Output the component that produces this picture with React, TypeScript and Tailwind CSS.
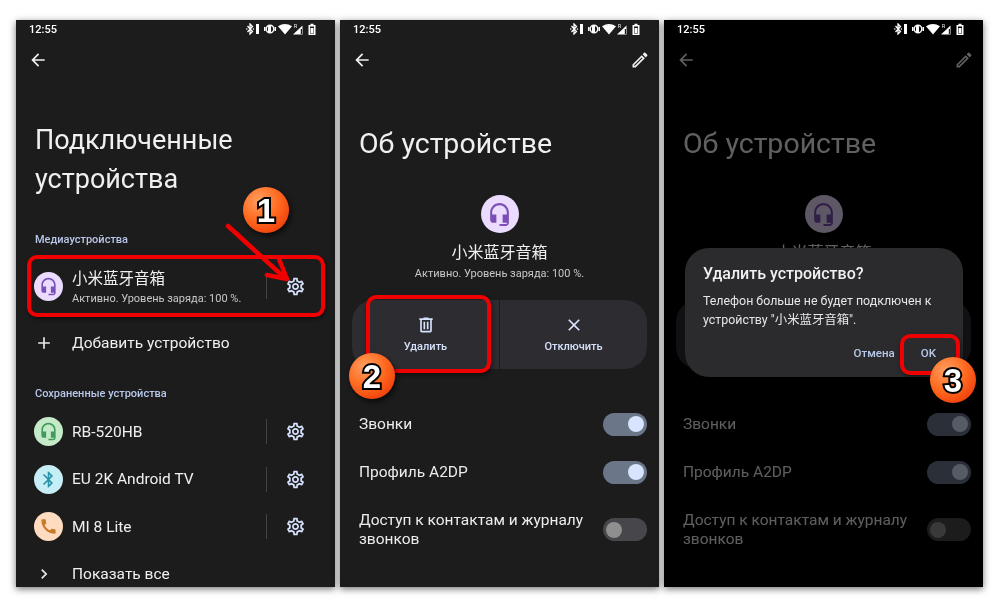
import React from "react";

const GEAR = "M19.43 12.98c.04-.32.07-.64.07-.98 0-.34-.03-.66-.07-.98l2.11-1.65c.19-.15.24-.42.12-.64l-2-3.46c-.09-.16-.26-.25-.44-.25-.06 0-.12.01-.17.03l-2.49 1c-.52-.4-1.08-.73-1.69-.98l-.38-2.65C14.46 2.18 14.25 2 14 2h-4c-.25 0-.46.18-.49.42l-.38 2.65c-.61.25-1.17.59-1.69.98l-2.49-1c-.06-.02-.12-.03-.18-.03-.17 0-.34.09-.43.25l-2 3.46c-.13.22-.07.49.12.64l2.11 1.65c-.04.32-.07.65-.07.98 0 .33.03.66.07.98l-2.11 1.65c-.19.15-.24.42-.12.64l2 3.46c.09.16.26.25.44.25.06 0 .12-.01.17-.03l2.49-1c.52.4 1.08.73 1.69.98l.38 2.65c.03.24.24.42.49.42h4c.25 0 .46-.18.49-.42l.38-2.65c.61-.25 1.17-.59 1.69-.98l2.49 1c.06.02.12.03.18.03.17 0 .34-.09.43-.25l2-3.46c.12-.22.07-.49-.12-.64l-2.11-1.65zm-1.98-1.71c.04.31.05.52.05.73 0 .21-.02.43-.05.73l-.14 1.13.89.7 1.08.84-.7 1.21-1.27-.51-1.04-.42-.9.68c-.43.32-.84.56-1.25.73l-1.06.43-.16 1.13-.2 1.35h-1.4l-.19-1.35-.16-1.13-1.06-.43c-.43-.18-.83-.41-1.23-.71l-.91-.7-1.06.43-1.27.51-.7-1.21 1.08-.84.89-.7-.14-1.13c-.03-.31-.05-.54-.05-.74s.02-.43.05-.73l.14-1.13-.89-.7-1.08-.84.7-1.21 1.27.51 1.04.42.9-.68c.43-.32.84-.56 1.25-.73l1.06-.43.16-1.13.2-1.35h1.39l.19 1.35.16 1.13 1.06.43c.43.18.83.41 1.23.71l.91.7 1.06-.43 1.27-.51.7 1.21-1.07.85-.89.7.14 1.13zM12 8c-2.21 0-4 1.79-4 4s1.79 4 4 4 4-1.79 4-4-1.79-4-4-4zm0 6c-1.1 0-2-.9-2-2s.9-2 2-2 2 .9 2 2-.9 2-2 2z";
const HEADSET = "M12 1c-4.97 0-9 4.03-9 9v7c0 1.66 1.34 3 3 3h3v-8H5v-2c0-3.87 3.13-7 7-7s7 3.13 7 7v2h-4v8h4v1h-7v2h6c1.66 0 3-1.34 3-3V10c0-4.97-4.03-9-9-9z";
const BT = "M17.71 7.71L12 2h-1v7.59L6.41 5 5 6.41 10.59 12 5 17.59 6.41 19 11 14.41V22h1l5.71-5.71-4.3-4.29 4.3-4.29zM13 5.83l1.88 1.88L13 9.59V5.83zm1.88 10.46L13 18.17v-3.76l1.88 1.88z";
const PHONE = "M20.01 15.38c-1.23 0-2.42-.2-3.53-.56-.35-.12-.74-.03-1.01.24l-1.57 1.97c-2.83-1.35-5.48-3.9-6.89-6.83l1.95-1.66c.27-.28.35-.67.24-1.02-.37-1.11-.56-2.3-.56-3.53 0-.54-.45-.99-.99-.99H4.19C3.65 3 3 3.24 3 3.99 3 13.28 10.73 21 20.01 21c.71 0 .99-.63.99-1.18v-3.45c0-.54-.45-.99-.99-.99z";
const TRASH = "M15 4V3H9v1H4v2h1v13c0 1.1.9 2 2 2h10c1.1 0 2-.9 2-2V6h1V4h-5zm2 15H7V6h10v13zM9 8h2v9H9zm4 0h2v9h-2z";
const PENCIL = "M14.06 9.02l.92.92L5.92 19H5v-.92l9.06-9.06M17.66 3c-.25 0-.51.1-.7.29l-1.83 1.83 3.75 3.75 1.83-1.83c.39-.39.39-1.02 0-1.41l-2.34-2.34c-.2-.2-.45-.29-.71-.29zm-3.6 3.19L3 17.25V21h3.75L17.81 9.94l-3.75-3.75z";
const ARROW = "M20 11H7.83l5.59-5.59L12 4l-8 8 8 8 1.41-1.41L7.83 13H20v-2z";
const CLOSE = "M19 6.41L17.59 5 12 10.59 6.41 5 5 6.41 10.59 12 5 17.59 6.41 19 12 13.41 17.59 19 19 17.59 13.41 12z";
const PLUS = "M19 13h-6v6h-2v-6H5v-2h6V5h2v6h6v2z";
const CHEVRON = "M10 6L8.59 7.41 13.17 12l-4.58 4.59L10 18l6-6z";

function Icon({ d, size, className }: { d: string; size: number; className?: string }) {
  return (
    <svg width={size} height={size} viewBox="0 0 24 24" fill="currentColor" className={"shrink-0 " + (className ?? "")}>
      <path d={d} />
    </svg>
  );
}

function StatusBar() {
  return (
    <div className="relative z-10 flex h-[18px] items-center justify-between pl-[13px] pr-[17px] text-white">
      <span className="text-[11px] font-medium leading-none">12:55</span>
      <svg width="72" height="12" viewBox="0 0 72 12" fill="white">
        <path d="M1.500 3l5 5.500-2.500 2.500V1l2.500 2.500-5 5.500" fill="none" stroke="white" strokeWidth="1.300" />
        <circle cx="0.800" cy="6" r="0.800" />
        <circle cx="7.400" cy="6" r="0.800" />
        <rect x="10" y="1" width="3" height="10" />
        <circle cx="24" cy="6" r="3.800" fill="none" stroke="white" strokeWidth="1.400" />
        <rect x="22" y="3" width="3" height="6" />
        <rect x="18" y="4" width="1.500" height="4" />
        <rect x="28.500" y="4" width="1.500" height="4" />
        <path d="M32 3.200Q39-1.200 46 3.200L39 11.500z" />
        <path d="M56.500 2.500V11.500H47z" />
        <rect x="54.800" y="6" width="1.200" height="5" fill="#1c1c1c" />
        <text x="48" y="5" fontSize="5" fontFamily="Roboto" fill="white">R</text>
        <path fillRule="evenodd" d="M62.500 2h2V.700h3V2h2v10h-7zM64 3.500V10.500h4V3.500z" />
        <rect x="64.500" y="5" width="3" height="5" />
      </svg>
    </div>
  );
}

function Avatar({ bg, fg, d, size = 29, icon = 19 }: { bg: string; fg: string; d: string; size?: number; icon?: number }) {
  return (
    <div className={"flex shrink-0 items-center justify-center rounded-full " + bg + " " + fg} style={{ width: size, height: size }}>
      <Icon d={d} size={icon} />
    </div>
  );
}

function DeviceRow({ avatar, title, sub, tall }: { avatar: React.ReactNode; title: string; sub?: string; tall?: boolean }) {
  return (
    <div className={"flex items-center pl-[18px] pr-[29px] " + (tall ? "h-[62px]" : "h-[47.5px]")}>
      {avatar}
      <div className={"ml-[9px] min-w-0 flex-1 " + (sub ? "pt-[3px]" : "")}>
        <div className="text-[15.500px] leading-[20px] text-[#f0f0f0]">{title}</div>
        {sub && <div className="mt-[3px] text-[11px] leading-[14px] text-[#c8c8c8]">{sub}</div>}
      </div>
      <div className="mr-[18px] h-[25px] w-px bg-[#444444]" />
      <Icon d={GEAR} size={21} className="text-[#d6e2fb]" />
    </div>
  );
}

function SectionLabel({ children, className }: { children: React.ReactNode; className?: string }) {
  return <div className={"pl-[19px] text-[11px] font-medium leading-[14px] text-[#b9c7ea] " + (className ?? "")}>{children}</div>;
}

function LinkRow({ d, size, children, className }: { d: string; size: number; children: React.ReactNode; className?: string }) {
  return (
    <div className={"flex items-center " + (className ?? "")}>
      <div className="flex w-[56px] justify-center text-[#e8e8e8]">
        <Icon d={d} size={size} />
      </div>
      <span className="text-[15.500px] leading-[20px] text-[#f0f0f0]">{children}</span>
    </div>
  );
}

function ConnectedScreen() {
  return (
    <section className="relative h-[567px] w-[319px] overflow-hidden bg-[#1c1c1c] shadow-[0_2px_7px_rgba(0,0,0,0.55)]">
      <StatusBar />
      <div className="flex h-[44px] items-center pl-[12px] text-[#f0f0f0]">
        <Icon d={ARROW} size={20} />
      </div>
      <h1 className="mt-[39px] pl-[19px] text-[27px] font-normal leading-[39px] text-[#f0f0f0]">
        Подключенные
        <br />
        устройства
      </h1>
      <SectionLabel className="mt-[34px]">Медиаустройства</SectionLabel>
      <div className="mt-[8px]">
        <DeviceRow
          tall
          avatar={<Avatar bg="bg-[#ebdcff]" fg="text-[#7b4fb5]" d={HEADSET} />}
          title="小米蓝牙音箱"
          sub="Активно. Уровень заряда: 100 %."
        />
      </div>
      <LinkRow d={PLUS} size={20} className="mt-[1px] h-[50px]">
        Добавить устройство
      </LinkRow>
      <SectionLabel className="mt-[19px]">Сохраненные устройства</SectionLabel>
      <div className="mt-[7px]">
        <DeviceRow avatar={<Avatar bg="bg-[#c4eac8]" fg="text-[#3f9a5b]" d={HEADSET} />} title="RB-520HB" />
        <DeviceRow avatar={<Avatar bg="bg-[#c5eef6]" fg="text-[#2a93a8]" d={BT} />} title="EU 2K Android TV" />
        <DeviceRow avatar={<Avatar bg="bg-[#ffdcc0]" fg="text-[#c77a2a]" d={PHONE} />} title="MI 8 Lite" />
      </div>
      <LinkRow d={CHEVRON} size={20} className="-mt-[1px] h-[48px]">
        Показать все
      </LinkRow>
    </section>
  );
}

function Toggle({ on }: { on: boolean }) {
  return (
    <div
      className={
        "flex h-[23px] w-[44px] shrink-0 items-center rounded-full px-[3px] " +
        (on ? "justify-end bg-[#6c7689]" : "justify-start bg-[#47464a]")
      }
    >
      <div className={"h-[16px] w-[16px] rounded-full " + (on ? "bg-[#d8e3ff]" : "bg-[#8f8f8f]")} />
    </div>
  );
}

function ToggleRow({ on, children, className }: { on: boolean; children: React.ReactNode; className?: string }) {
  return (
    <div className={"flex items-center justify-between pl-[19px] pr-[12px] " + (className ?? "")}>
      <span className="w-[236px] text-[15.500px] leading-[19px] text-[#ececec]">{children}</span>
      <Toggle on={on} />
    </div>
  );
}

function ActionButton({ d, label }: { d: string; label: string }) {
  return (
    <div className="flex flex-1 flex-col items-center pt-[15px]">
      <Icon d={d} size={20} className="text-[#d6e2fb]" />
      <span className="mt-[5px] text-[11px] font-medium leading-[14px] text-[#d6e2fb]">{label}</span>
    </div>
  );
}

function AboutContent({ dim }: { dim?: boolean }) {
  return (
    <div className={dim ? "opacity-40" : ""}>
      <div className="flex h-[44px] items-center justify-between pl-[12px] pr-[9px] text-[#f0f0f0]">
        <Icon d={ARROW} size={20} />
        <Icon d={PENCIL} size={20} />
      </div>
      <h1 className="mt-[42px] pl-[19px] text-[28.500px] font-normal leading-[39px] text-[#f0f0f0]">Об устройстве</h1>
      <div className="mt-[32px] flex flex-col items-center">
        <Avatar bg="bg-[#ebdcff]" fg="text-[#7b4fb5]" d={HEADSET} size={38} icon={25} />
        <div className="mt-[9px] text-[16px] leading-[22px] text-[#f0f0f0]">小米蓝牙音箱</div>
        <div className="mt-[3px] text-[11px] leading-[14px] text-[#c8c8c8]">Активно. Уровень заряда: 100 %.</div>
      </div>
      <div className="mx-[12px] mt-[19px] flex h-[69px] overflow-hidden rounded-[22px] bg-[#2c2c31]">
        <ActionButton d={TRASH} label="Удалить" />
        <div className="w-px bg-[#1c1c1c]" />
        <ActionButton d={CLOSE} label="Отключить" />
      </div>
      <ToggleRow on className="mt-[31px] h-[48px]">Звонки</ToggleRow>
      <ToggleRow on className="h-[48px]">Профиль A2DP</ToggleRow>
      <ToggleRow on={false} className="mt-[9px] h-[48px] pt-[1px]">Доступ к контактам и журналу звонков</ToggleRow>
    </div>
  );
}

function AboutScreen() {
  return (
    <section className="relative h-[567px] w-[319px] overflow-hidden bg-[#1c1c1c] shadow-[0_2px_7px_rgba(0,0,0,0.55)]">
      <StatusBar />
      <AboutContent />
    </section>
  );
}

function DialogScreen() {
  return (
    <section className="relative h-[567px] w-[319px] overflow-hidden bg-black shadow-[0_2px_7px_rgba(0,0,0,0.55)]">
      <StatusBar />
      <AboutContent dim />
      <div className="absolute left-[21px] top-[228px] h-[129px] w-[278px] rounded-[24px] bg-[#2b2b2e] px-[18px] pt-[15px]">
        <div className="text-[16px] font-medium leading-[22px] text-[#f0f0f0]">Удалить устройство?</div>
        <div className="mt-[6px] text-[12.400px] leading-[19px] text-[#e6e6e6]">
          Телефон больше не будет подключен к устройству "小米蓝牙音箱".
        </div>
        <div className="mt-[16px] flex justify-end gap-[26px] pr-[9px] text-[11.500px] font-medium leading-[16px] text-[#b9c7ea]">
          <span>Отмена</span>
          <span>OK</span>
        </div>
      </div>
    </section>
  );
}

function Badge({ n, className }: { n: string; className: string }) {
  return (
    <div
      className={
        "absolute z-20 flex h-[46px] w-[46px] items-center justify-center rounded-full bg-[radial-gradient(circle_at_35%_30%,#ffa060_0%,#ff6a20_45%,#e82800_100%)] shadow-[2px_3px_5px_rgba(0,0,0,0.6)] font-['Liberation_Sans',sans-serif] text-[33px] font-bold leading-none text-white [-webkit-text-stroke:4px_#000] [paint-order:stroke_fill] " +
        className
      }
    >
      {n}
    </div>
  );
}

function RedBox({ className }: { className: string }) {
  return <div className={"absolute z-20 rounded-[10px] border-[4px] border-[#f00000] shadow-[1px_2px_4px_rgba(0,0,0,0.5)] " + className} />;
}

export default function App() {
  return (
    <div className="relative h-[603px] w-[999px] overflow-hidden bg-white font-['Roboto','Noto_Sans_CJK_SC',sans-serif] blur-[0.35px]">
      <div className="flex gap-[5px] pl-[16px] pt-[20px]">
        <ConnectedScreen />
        <AboutScreen />
        <DialogScreen />
      </div>

      <RedBox className="left-[27px] top-[255px] h-[62px] w-[298px]" />
      <svg className="absolute left-[220px] top-[220px] z-20" width="75" height="70" viewBox="220 220 75 70" fill="none" stroke="#f00000" strokeWidth="4.500" strokeLinecap="round" strokeLinejoin="round">
        <path d="M228 226L286 279M279 259L287 279L267 275" />
      </svg>
      <Badge n="1" className="left-[243px] top-[187px]" />

      <RedBox className="left-[366px] top-[295px] h-[78px] w-[125px]" />
      <Badge n="2" className="left-[349px] top-[353px]" />

      <RedBox className="left-[900px] top-[334px] h-[41px] w-[60px]" />
      <Badge n="3" className="left-[930px] top-[357px]" />
    </div>
  );
}
